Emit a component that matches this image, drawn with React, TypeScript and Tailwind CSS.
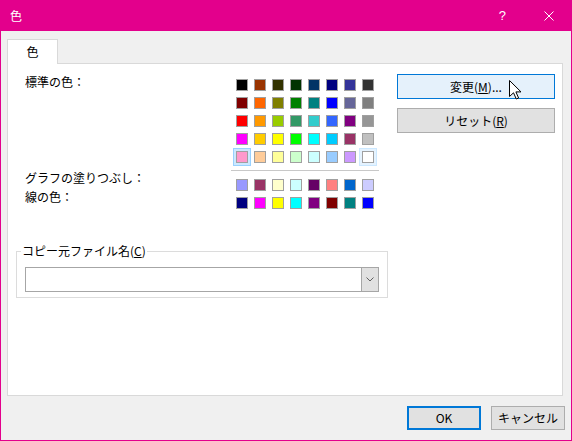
const standardColors = [
  ['#000000', '#993300', '#333300', '#003300', '#003366', '#000080', '#333399', '#333333'],
  ['#800000', '#ff6600', '#808000', '#008000', '#008080', '#0000ff', '#666699', '#808080'],
  ['#ff0000', '#ff9900', '#99cc00', '#339966', '#33cccc', '#3366ff', '#800080', '#969696'],
  ['#ff00ff', '#ffcc00', '#ffff00', '#00ff00', '#00ffff', '#00ccff', '#993366', '#c0c0c0'],
  ['#ff99cc', '#ffcc99', '#ffff99', '#ccffcc', '#ccffff', '#99ccff', '#cc99ff', '#ffffff'],
];

const chartColors = [
  ['#9999ff', '#993366', '#ffffcc', '#ccffff', '#660066', '#ff8080', '#0066cc', '#ccccff'],
  ['#000080', '#ff00ff', '#ffff00', '#00ffff', '#800080', '#800000', '#008080', '#0000ff'],
];

function Swatch({ color, state }: { color: string; state?: 'selected' | 'hover' }) {
  let cell = 'w-[18px] h-[18px] flex items-center justify-center border border-transparent';
  if (state === 'selected') cell = 'w-[18px] h-[18px] flex items-center justify-center border border-[#99d1ff] bg-[#cce8ff]';
  if (state === 'hover') cell = 'w-[18px] h-[18px] flex items-center justify-center border border-[#cce8ff] bg-[#e5f3ff]';
  return (
    <div className={cell}>
      <div className="w-[12px] h-[12px] border border-[#a0a0a0]" style={{ backgroundColor: color }} />
    </div>
  );
}

// mouse pointer resting over the "変更" button
function Cursor() {
  return (
    <svg width="13" height="20" viewBox="0 0 13 20" className="absolute left-[112px] top-[6px]">
      <path
        d="M0.5 0.5 L0.5 16.5 L4.5 12.8 L7.3 19 L9.6 18 L6.9 11.9 L12 11.9 Z"
        fill="#ffffff"
        stroke="#000000"
        strokeWidth="1"
        strokeLinejoin="miter"
      />
    </svg>
  );
}

export default function App() {
  return (
    <div
      className="w-[572px] h-[441px] border border-[#e3008c] bg-[#f0f0f0] flex flex-col text-[12px] text-black"
      style={{ fontFamily: '"Noto Sans CJK JP", "Noto Sans", sans-serif' }}
    >
      {/* title bar */}
      <div className="h-[30px] bg-[#e3008c] flex items-center pl-[9px] pr-[17px] text-white shrink-0">
        <span className="leading-[16px]">色</span>
        <div className="flex-1" />
        <span
          className="text-[13px] leading-[16px] mr-[38px]"
          style={{ fontFamily: '"Liberation Sans", sans-serif' }}
        >
          ?
        </span>
        <svg width="10" height="10" viewBox="0 0 10 10">
          <path d="M0.5 0.5 L9.5 9.5 M9.5 0.5 L0.5 9.5" stroke="#ffffff" strokeWidth="1" />
        </svg>
      </div>

      {/* tabs */}
      <div className="flex mt-[8px] ml-[6px]">
        <div className="relative z-10 w-[51px] h-[25px] -mb-px bg-white border-x border-t border-[#d9d9d9] flex items-center justify-center leading-[16px]">
          色
        </div>
      </div>

      {/* tab panel */}
      <div className="ml-[6px] w-[556px] h-[333px] bg-white border border-[#d9d9d9] flex flex-col">
        <div className="flex pt-[10px]">
          {/* labels */}
          <div className="w-[225px] pl-[17px] flex flex-col leading-[16px]">
            <span>標準の色：</span>
            <span className="mt-[80px]">グラフの塗りつぶし：</span>
            <span className="mt-[3px]">線の色：</span>
          </div>

          {/* colour grid */}
          <div className="flex flex-col mt-[2px]">
            <div className="grid grid-cols-8 w-[144px]">
              {standardColors.flatMap((row, r) =>
                row.map((c, i) => (
                  <Swatch
                    key={`s-${r}-${i}`}
                    color={c}
                    state={r === 4 && i === 0 ? 'selected' : r === 4 && i === 7 ? 'hover' : undefined}
                  />
                ))
              )}
            </div>
            <div className="h-px bg-[#c8c8c8] mt-[4px] -mx-[2px]" />
            <div className="grid grid-cols-8 w-[144px] mt-[5px]">
              {chartColors.flatMap((row, r) =>
                row.map((c, i) => <Swatch key={`c-${r}-${i}`} color={c} />)
              )}
            </div>
          </div>

          {/* buttons */}
          <div className="relative ml-[20px] w-[158px] flex flex-col gap-[9px]">
            <button className="h-[25px] bg-[#e5f1fb] border border-[#0078d7] leading-[16px]">
              変更(<span className="underline">M</span>)...
            </button>
            <button className="h-[25px] bg-[#e1e1e1] border border-[#adadad] leading-[16px]">
              リセット(<span className="underline">R</span>)
            </button>
            <Cursor />
          </div>
        </div>

        {/* group box */}
        <fieldset className="ml-[8px] mt-[31px] w-[372px] border border-[#dcdcdc]">
          <legend className="ml-[4px] px-[1px] leading-[16px]">
            コピー元ファイル名(<span className="underline">C</span>)
          </legend>
          <div className="px-[8px] pb-[5px]">
            <div className="mt-[8px] h-[25px] border border-[#a6a6a6] bg-white flex">
              <div className="flex-1" />
              <div className="w-[17px] bg-[#e1e1e1] border-l border-[#a6a6a6] flex items-center justify-center">
                <svg width="8" height="5" viewBox="0 0 8 5">
                  <path d="M0.5 0.5 L4 4 L7.5 0.5" fill="none" stroke="#606060" strokeWidth="1" />
                </svg>
              </div>
            </div>
          </div>
        </fieldset>
      </div>

      {/* dialog buttons */}
      <div className="flex justify-end gap-[10px] pr-[6px] mt-[10px]">
        <button className="w-[74px] h-[24px] bg-[#e1e1e1] border-2 border-[#0078d7] leading-[16px]">OK</button>
        <button className="w-[74px] h-[24px] bg-[#e1e1e1] border border-[#adadad] leading-[16px]">キャンセル</button>
      </div>
    </div>
  );
}
